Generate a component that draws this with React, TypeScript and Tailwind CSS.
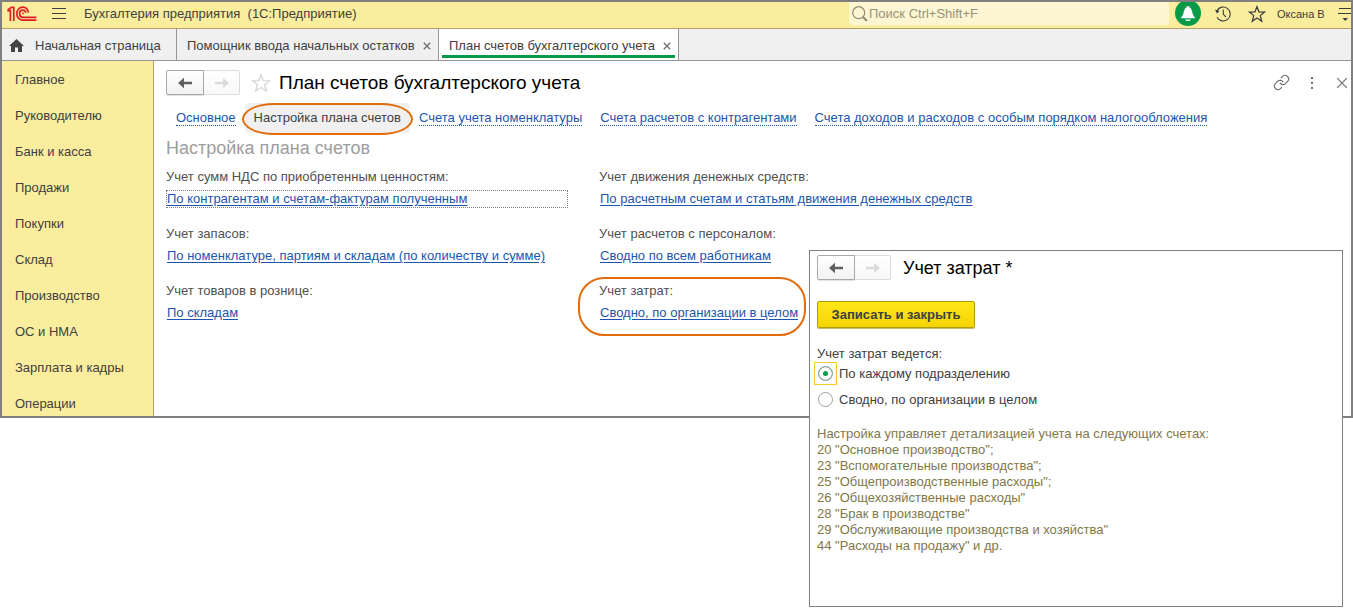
import { useState } from "react";
import { Link } from "lucide-react";

const SECTIONS = [
  "Главное",
  "Руководителю",
  "Банк и касса",
  "Продажи",
  "Покупки",
  "Склад",
  "Производство",
  "ОС и НМА",
  "Зарплата и кадры",
  "Операции",
];

const NAV_LINKS = [
  { label: "Основное" },
  { label: "Настройка плана счетов", active: true },
  { label: "Счета учета номенклатуры" },
  { label: "Счета расчетов с контрагентами" },
  { label: "Счета доходов и расходов с особым порядком налогообложения" },
];

const SETTINGS = [
  { label: "Учет сумм НДС по приобретенным ценностям:", value: "По контрагентам и счетам-фактурам полученным", focused: true },
  { label: "Учет движения денежных средств:", value: "По расчетным счетам и статьям движения денежных средств" },
  { label: "Учет запасов:", value: "По номенклатуре, партиям и складам (по количеству и сумме)" },
  { label: "Учет расчетов с персоналом:", value: "Сводно по всем работникам" },
  { label: "Учет товаров в рознице:", value: "По складам" },
  { label: "Учет затрат:", value: "Сводно, по организации в целом", marked: true },
];

const ACCOUNTS = [
  '20 "Основное производство";',
  '23 "Вспомогательные производства";',
  '25 "Общепроизводственные расходы";',
  '26 "Общехозяйственные расходы"',
  '28 "Брак в производстве"',
  '29 "Обслуживающие производства и хозяйства"',
  '44 "Расходы на продажу" и др.',
];

const COST_MODES = ["По каждому подразделению", "Сводно, по организации в целом"];

function Logo() {
  return (
    <svg width="30" height="16" viewBox="0 0 30 16" fill="none" stroke="#dd1f26" strokeWidth="1.7">
      <path d="M0.3 4.6 H3.4 V15 M0.8 4 L4.4 1.3 H6.8 V15" />
      <path d="M21.4 6.6 C20.8 3.2 18.6 1.2 15.8 1.2 C12.4 1.2 9.8 3.9 9.8 7.4 C9.8 11.4 12.6 14.2 16.2 14.2 H29.4" />
      <path d="M18.8 6.8 C18.4 5 17.4 4.1 15.8 4.1 C13.9 4.1 12.6 5.5 12.6 7.4 C12.6 9.8 14.1 11.3 16.2 11.3 H29.4" />
      <path d="M15.2 7.3 H16.8" />
    </svg>
  );
}

function Star({ className, size }: { className?: string; size: number }) {
  return (
    <svg width={size} height={size} viewBox="0 0 20 20" fill="none" stroke="currentColor" strokeWidth="1.4" className={className}>
      <path d="M10 1.8 L12.2 7.6 L18.5 7.9 L13.6 11.8 L15.3 18 L10 14.5 L4.7 18 L6.4 11.8 L1.5 7.9 L7.8 7.6 Z" />
    </svg>
  );
}

function Cross({ size, bold }: { size: number; bold?: boolean }) {
  return (
    <svg width={size} height={size} viewBox="0 0 10 10" stroke="currentColor" strokeWidth={bold ? 1.7 : 1}>
      <path d="M1 1 L9 9 M9 1 L1 9" />
    </svg>
  );
}

function Arrow({ flip }: { flip?: boolean }) {
  return (
    <svg width="14" height="12" viewBox="0 0 14 12" fill="currentColor" className={flip ? "rotate-180" : ""}>
      <path d="M0 6 L6 0.8 V4.7 H14 V7.3 H6 V11.2 Z" />
    </svg>
  );
}

function HistoryButtons() {
  return (
    <div className="flex shrink-0">
      <button aria-label="Назад" className="z-10 flex h-[25px] w-[38px] items-center justify-center rounded-l-[2px] border border-[#a8a8a8] bg-gradient-to-b from-white to-[#f2f2f2] text-[#606060] shadow-[0_1px_0_#e4e4e4]">
        <Arrow />
      </button>
      <button aria-label="Вперед" className="flex h-[25px] w-9 items-center justify-center rounded-r-[2px] border border-l-0 border-[#dcdcdc] bg-gradient-to-b from-white to-[#f8f8f8] text-[#dcdcdc]">
        <Arrow flip />
      </button>
    </div>
  );
}

function TopBar() {
  return (
    <header className="flex h-[27px] items-center border-b border-[#b0a36a] bg-[#fbed9e] pb-[2px] pl-[5px]">
      <Logo />
      <button aria-label="Меню" className="ml-[15px] text-[#404040]">
        <svg width="14" height="12" viewBox="0 0 14 12" stroke="currentColor">
          <path d="M0 0.5 H14 M0 5.5 H14 M0 10.5 H14" />
        </svg>
      </button>
      <span className="ml-[18px] whitespace-pre text-[13px] text-[#404040]">Бухгалтерия предприятия  (1С:Предприятие)</span>
      <div className="ml-auto flex h-full items-start">
        <label className="flex h-[23px] w-80 items-center rounded-b-sm bg-[#fef6d3] pl-[3px] text-[#8f8a72]">
          <svg width="16" height="16" viewBox="0 0 16 16" fill="none" stroke="currentColor" strokeWidth="1.2">
            <circle cx="6.7" cy="6.7" r="6" />
            <path d="M11 11 L15 15" strokeWidth="2.2" />
          </svg>
          <input aria-label="Поиск" placeholder="Поиск Ctrl+Shift+F" className="ml-px min-w-0 flex-1 bg-transparent text-[13px] outline-none placeholder:text-[#99937a]" />
        </label>
        <button aria-label="Уведомления" className="ml-[6px]">
          <svg width="26" height="24" viewBox="0 0 26 24">
            <circle cx="13" cy="11" r="13" fill="#079b49" />
            <path d="M13 4 C14 4 14.6 4.8 14.8 5.6 C16.6 6.6 17 9 17.6 11.5 C18.1 13.5 19.2 14.6 20.4 16.2 H5.6 C6.8 14.6 7.9 13.5 8.4 11.5 C9 9 9.4 6.6 11.2 5.6 C11.4 4.8 12 4 13 4 Z M10.2 17.4 H15.8 C15.5 18.4 14.4 19 13 19 C11.6 19 10.5 18.4 10.2 17.4 Z" fill="white" />
          </svg>
        </button>
        <div className="flex h-full items-center text-[#3b3b3b]">
          <button aria-label="История" className="ml-[14px]">
            <svg width="16" height="16" viewBox="0 0 16 16" fill="none" stroke="currentColor" strokeWidth="1.1">
              <path d="M2 4.8 A7 7 0 1 1 2 11.2" />
              <path d="M8.3 3.5 V8.3 L11 11" />
              <path d="M0 3.6 L4.6 5 L1.8 7.6 Z" fill="currentColor" stroke="none" />
            </svg>
          </button>
          <button aria-label="Избранное" className="ml-[17px]">
            <Star size={18} />
          </button>
          <button className="ml-[11px] w-12 whitespace-nowrap text-left text-[11px]">Оксана В</button>
          <button aria-label="Настройки окна" className="ml-[13px]">
            <svg width="13" height="14" viewBox="0 0 13 14">
              <path d="M1 1.5 H13 M0 6.5 H13" stroke="currentColor" />
              <path d="M4.5 11 H10 L7.2 14 Z" fill="currentColor" />
            </svg>
          </button>
        </div>
      </div>
    </header>
  );
}

function TabBar() {
  return (
    <nav className="flex h-8 border-b border-[#969696] bg-[#f0f0f0] text-[13px] leading-4 text-[#404040]">
      <button className="flex w-[175px] items-center border-r border-[#969696] pt-[2px] pl-[7px] whitespace-nowrap">
        <svg width="15" height="13" viewBox="0 0 15 13" fill="#444444">
          <path d="M7.5 0 L15 7 H13 V13 H9 V8.5 H6 V13 H2 V7 H0 Z" />
        </svg>
        <span className="ml-[11px]">Начальная страница</span>
      </button>
      <div className="flex w-[262px] items-center justify-between border-r border-[#969696] pt-[2px] pr-[7px] pl-[10px] whitespace-nowrap">
        <a href="#balances">Помощник ввода начальных остатков</a>
        <button aria-label="Закрыть вкладку" className="text-[#707070]">
          <Cross size={8} bold />
        </button>
      </div>
      <div className="flex w-60 flex-col border-r border-[#969696] bg-white px-[3px] pb-[2px]">
        <div className="flex flex-1 items-center justify-between border-b-3 border-[#079b49] pt-[7px] pr-1 pl-[7px] whitespace-nowrap">
          <a href="#plan">План счетов бухгалтерского учета</a>
          <button aria-label="Закрыть вкладку" className="text-[#707070]">
            <Cross size={8} bold />
          </button>
        </div>
      </div>
    </nav>
  );
}

function Sidebar() {
  return (
    <ul className="flex w-[152px] shrink-0 flex-col gap-4 border-r border-[#b0a36a] bg-[#fbed9e] pt-[9px] pb-[2px] pl-[13px] text-[13px] leading-5 text-[#404040]">
      {SECTIONS.map((name) => (
        <li key={name}>
          <a href="#section">{name}</a>
        </li>
      ))}
    </ul>
  );
}

function CostDialog() {
  const [mode, setMode] = useState(0);

  return (
    <section className="absolute top-[250px] right-[10px] w-[534px] border border-[#808080] bg-white px-[7px] pt-1 pb-[52px] text-[13px]">
      <div className="flex items-center">
        <HistoryButtons />
        <h2 className="ml-3 text-[18px] leading-6 text-black">Учет затрат *</h2>
      </div>
      <button className="mt-[21px] h-[27px] w-[158px] rounded-[2px] border border-[#b09c00] bg-gradient-to-b from-[#ffe81a] to-[#f5d400] text-[13px] font-bold whitespace-nowrap text-[#404040] shadow-[0_1px_0_#c8bb70]">
        Записать и закрыть
      </button>
      <fieldset className="mt-[18px] text-[#404040]">
        <legend className="leading-4">Учет затрат ведется:</legend>
        <div className="flex flex-col gap-[3px]">
          {COST_MODES.map((name, i) => (
            <label key={name} className="-ml-[3px] flex h-[23px] items-center gap-[2px] whitespace-nowrap">
              <span className="flex size-[23px] items-center justify-center border border-transparent has-checked:border-[#f5cb2e]">
                <input
                  type="radio"
                  name="cost-mode"
                  checked={mode === i}
                  onChange={() => setMode(i)}
                  className="size-[15px] appearance-none rounded-full border border-[#a0a0a0] bg-white checked:bg-[#079b49] checked:shadow-[inset_0_0_0_4px_white]"
                />
              </span>
              {name}
            </label>
          ))}
        </div>
      </fieldset>
      <div className="mt-[15px] leading-4 text-[#7f7849]">
        <p>Настройка управляет детализацией учета на следующих счетах:</p>
        {ACCOUNTS.map((account) => (
          <p key={account}>{account}</p>
        ))}
      </div>
    </section>
  );
}

export default function App() {
  return (
    <div className="relative min-h-screen bg-white font-['Liberation_Sans',Arial,sans-serif]">
      <div className="border-2 border-[#808080]">
        <TopBar />
        <TabBar />
        <div className="flex">
          <Sidebar />
          <main className="min-w-0 flex-1 pt-[9px] pl-3">
            <div className="flex items-center">
              <HistoryButtons />
              <button aria-label="В избранное" className="ml-[11px] text-[#d8d8d8]">
                <Star size={20} />
              </button>
              <h1 className="ml-2 text-[19px] leading-6 whitespace-nowrap text-black">План счетов бухгалтерского учета</h1>
              <div className="ml-auto flex items-center pr-[3px] text-[#707070]">
                <button aria-label="Ссылка">
                  <Link size={17} strokeWidth={1.6} />
                </button>
                <button aria-label="Еще" className="ml-[20px]">
                  <svg width="4" height="12" viewBox="0 0 4 12" fill="currentColor">
                    <path d="M1 0 H3 V2 H1 Z M1 5 H3 V7 H1 Z M1 10 H3 V12 H1 Z" />
                  </svg>
                </button>
                <button aria-label="Закрыть" className="ml-[22px]">
                  <Cross size={12} />
                </button>
              </div>
            </div>
            <nav className="mt-2 flex pl-px text-[13px] leading-[30px] whitespace-nowrap">
              {NAV_LINKS.map((link) =>
                link.active ? (
                  <a key={link.label} href="#settings" className="relative rounded-sm bg-[#f0f0f0] px-[9px] text-[#404040]">
                    {link.label}
                    <span className="absolute -inset-x-[3px] top-0 -bottom-[2px] rounded-[32px/16px] border-2 border-[#e36c0a]" />
                  </a>
                ) : (
                  <a key={link.label} href="#link" className="px-[9px] text-[#1c55ae]">
                    <span className="border-b border-dotted border-[#1c55ae]">{link.label}</span>
                  </a>
                )
              )}
            </nav>
            <h2 className="mt-[3px] text-[18px] leading-6 text-[#9d9d9d]">Настройка плана счетов</h2>
            <dl className="mt-[7px] grid grid-cols-[402px_1fr] gap-x-[31px] gap-y-4 text-[13px] whitespace-nowrap">
              {SETTINGS.map((item) => (
                <div key={item.label} className="relative">
                  <dt className="leading-5 text-[#505050]">{item.label}</dt>
                  <dd className={item.focused ? "mt-[3px] border border-dotted border-[#808080] leading-4" : "mt-[3px] border border-transparent leading-4"}>
                    <a href="#edit" className="text-[#1c55ae] underline underline-offset-2">
                      {item.value}
                    </a>
                  </dd>
                  {item.marked && (
                    <span className="absolute -top-1 -left-[21px] h-[59px] w-[228px] rounded-[26px] border-2 border-[#e36c0a]" />
                  )}
                </div>
              ))}
            </dl>
          </main>
        </div>
      </div>
      <CostDialog />
    </div>
  );
}
